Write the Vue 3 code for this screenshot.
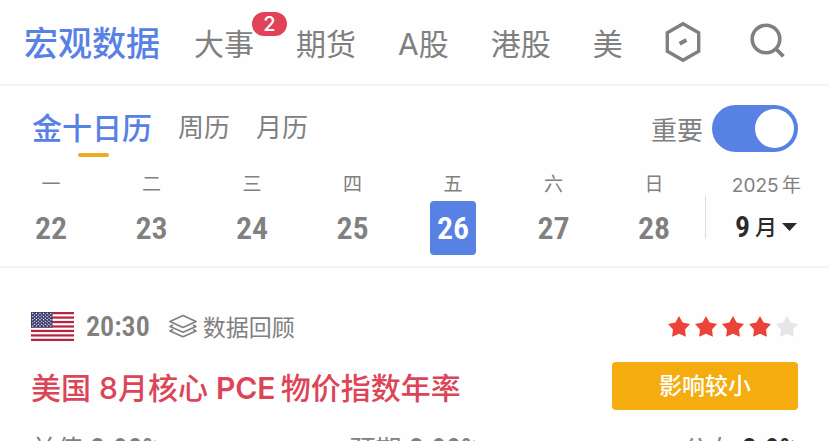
<template>
  <div class="page">
    <header class="top-bar">
      <nav class="channels">
        <a
          v-for="item in channels"
          :key="item.name"
          href="#"
          class="channel"
          :class="{ active: item.active }"
        >{{ item.name }}<span v-if="item.badge" class="badge">{{ item.badge }}</span></a>
      </nav>
      <button class="icon-btn" aria-label="设置">
        <svg width="36" height="42" viewBox="0 0 36 42" fill="none" stroke="#808080" stroke-width="3.4">
          <path d="M18 2.8 L33.7 11.8 V30.2 L18 39.2 L2.3 30.2 V11.8 Z" />
          <path d="M14.6 22.8 L21.4 19" stroke-width="4" />
        </svg>
      </button>
      <button class="icon-btn" aria-label="搜索">
        <svg width="38" height="38" viewBox="0 0 38 38" fill="none" stroke="#808080" stroke-width="3.6">
          <circle cx="17" cy="16" r="13.8" />
          <path d="M26.5 25.5 L34.4 33.4" stroke-width="3.8" />
        </svg>
      </button>
    </header>

    <section class="calendar">
      <div class="modes">
        <button v-for="(mode, i) in modes" :key="mode" class="mode" :class="{ active: i === 0 }">{{ mode }}</button>
        <label class="important">
          重要
          <input v-model="important" type="checkbox" class="switch" />
        </label>
      </div>
      <div class="week">
        <div class="days">
          <button v-for="day in days" :key="day.date" class="day" :class="{ active: day.date === selected }" @click="selected = day.date">
            <span class="weekday">{{ day.week }}</span>
            <span class="date">{{ day.date }}</span>
          </button>
        </div>
        <span class="divider"></span>
        <button class="month">
          <span class="year">2025&thinsp;年</span>
          <span class="month-value">
            <b>9</b>
            <span>月</span>
            <svg width="15" height="8" viewBox="0 0 15 8" fill="currentColor"><path d="M0 0 H15 L7.5 8 Z" /></svg>
          </span>
        </button>
      </div>
    </section>

    <article class="event">
      <div class="event-meta">
        <svg class="flag" width="43" height="29" viewBox="0 0 43 29">
          <rect width="43" height="29" fill="#fff" />
          <rect v-for="n in 7" :key="n" y="0" width="43" height="2.23" :transform="`translate(0 ${(n - 1) * 4.46})`" fill="#b72540" />
          <rect width="21.5" height="15.6" fill="#3c3b6e" />
          <circle v-for="(s, i) in flagStars" :key="i" :cx="s.x" :cy="s.y" r="0.65" fill="#fff" />
        </svg>
        <time class="time">20:30</time>
        <a href="#" class="review">
          <svg width="30" height="24" viewBox="0 0 30 24" fill="none" stroke="#808080" stroke-width="1.7" stroke-linejoin="round">
            <path d="M15 1.5 L28 7.5 L15 13.5 L2 7.5 Z" />
            <path d="M5 11 L2 12.5 L15 18.2 L28 12.5 L25 11" />
            <path d="M5 15.5 L2 17 L15 22.7 L28 17 L25 15.5" />
          </svg>
          数据回顾
        </a>
        <div class="stars" role="img" aria-label="4 / 5">
          <svg v-for="n in 5" :key="n" width="22" height="21" viewBox="0 0 22 21" class="star" :class="{ on: n <= 4 }">
            <path d="M11 0 L14.6 6.4 L22 7.9 L17 13.4 L17.9 20.7 L11 17.8 L4.1 20.7 L5 13.4 L0 7.9 L7.4 6.4 Z" />
          </svg>
        </div>
      </div>
      <div class="event-main">
        <h2 class="title">美国 8月核心 <span class="latin">PCE</span>&thinsp;物价指数年率</h2>
        <button class="impact">影响较小</button>
      </div>
      <div class="values">
        <span>前值 <b>2.90%</b></span>
        <span>预期 <b>2.90%</b></span>
        <span>公布 <b class="actual">2.9%</b></span>
      </div>
    </article>
  </div>
</template>

<script setup>
import { ref } from 'vue'

const important = ref(true)
const selected = ref(26)

const channels = [
  { name: '宏观数据', active: true },
  { name: '大事', badge: 2 },
  { name: '期货' },
  { name: 'A股' },
  { name: '港股' },
  { name: '美' }
]

const modes = ['金十日历', '周历', '月历']

const days = ['一', '二', '三', '四', '五', '六', '日'].map((week, i) => ({ week, date: 22 + i }))

// 9 rows, alternating 6 and 5 stars
const flagStars = []
for (let row = 0; row < 9; row++) {
  const count = row % 2 ? 5 : 6
  for (let col = 0; col < count; col++) {
    flagStars.push({ x: (row % 2 ? 3.6 : 1.8) + col * 3.6, y: 1.5 + row * 1.56 })
  }
}
</script>

<style>
body {
  background: #fefefe;
}
</style>

<style scoped>
.page {
  height: 100vh;
  overflow: hidden;
  color: #808080;
  font-family: Inter, "Noto Sans CJK SC", sans-serif;
}

button {
  padding: 0;
  border: 0;
  background: none;
  color: inherit;
  font: inherit;
  cursor: pointer;
}

a {
  color: inherit;
  text-decoration: none;
}

svg {
  display: block;
}

.top-bar {
  display: flex;
  align-items: center;
  height: 84px;
  padding: 0 42px 0 24px;
  border-bottom: 2px solid #f5f5f5;
}

.channels {
  display: flex;
  align-items: center;
  gap: 42px;
  margin-right: auto;
  padding-top: 4px;
}

.channel {
  position: relative;
  font-size: 30px;
  line-height: 40px;
  white-space: nowrap;
}
.channel.active {
  margin-right: -8px;
  color: #5781e3;
  font-size: 34px;
  font-weight: 500;
}

.badge {
  position: absolute;
  top: -12px;
  left: 58px;
  width: 35px;
  border-radius: 12px;
  background: #e14258;
  color: #fff;
  font-size: 20px;
  font-weight: 500;
  line-height: 24px;
  text-align: center;
}

.icon-btn {
  margin-left: 40px;
}
.icon-btn + .icon-btn {
  margin-left: 48px;
}

.calendar {
  padding: 18px 28px 11px 32px;
  border-bottom: 2px solid #f5f5f5;
}

.modes {
  display: flex;
  align-items: center;
  gap: 26px;
}

.mode {
  position: relative;
  font-size: 26px;
  line-height: 48px;
}
.mode.active {
  color: #5781e3;
  font-size: 30px;
  font-weight: 500;
}
.mode.active::after {
  content: "";
  position: absolute;
  bottom: -5px;
  left: 46px;
  width: 31px;
  height: 4px;
  border-radius: 2px;
  background: #eeab28;
}

.important {
  display: flex;
  align-items: center;
  gap: 9px;
  margin-left: auto;
  font-size: 26px;
}

.switch {
  display: flex;
  align-items: center;
  width: 86px;
  height: 47px;
  margin: 0 3px 0 0;
  padding: 4px;
  box-sizing: border-box;
  border-radius: 24px;
  background: #ccc;
  appearance: none;
}
.switch::before {
  content: "";
  width: 39px;
  height: 39px;
  border-radius: 50%;
  background: #fff;
}
.switch:checked {
  justify-content: flex-end;
  background: #5781e3;
}

.week {
  display: flex;
  align-items: center;
  padding-top: 19px;
}

.days {
  display: flex;
  flex: 1;
  justify-content: space-between;
  margin-left: -4px;
  padding-right: 28px;
}

.day {
  display: flex;
  flex-direction: column;
  align-items: center;
  width: 46px;
}

.weekday,
.year {
  font-size: 19px;
  line-height: 28px;
}

.date {
  width: 46px;
  margin-top: 2px;
  border-radius: 4px;
  font-size: 32px;
  line-height: 54px;
}
.date,
.time,
b {
  font-family: "Roboto Condensed", Roboto, "Noto Sans CJK SC", sans-serif;
  font-weight: 600;
}
.day.active .date {
  background: #5781e3;
  color: #fff;
}

.divider {
  align-self: flex-end;
  width: 1px;
  height: 43px;
  margin-bottom: 16px;
  background: #dcdcdc;
}

.month {
  display: flex;
  flex-direction: column;
  align-items: flex-end;
  width: 95px;
}

.month-value {
  display: flex;
  align-items: center;
  gap: 5px;
  padding-right: 4px;
  color: #2b2b2b;
  font-size: 22px;
  font-weight: 500;
  line-height: 54px;
}
.month-value b {
  font-size: 30px;
}

.event {
  padding: 41px 31px 0;
}

.event-meta {
  display: flex;
  align-items: center;
  height: 34px;
}

.time {
  margin-left: 12px;
  font-size: 28px;
}

.review {
  display: flex;
  align-items: center;
  gap: 5px;
  margin-left: 18px;
  font-size: 23px;
}

.stars {
  display: flex;
  gap: 5px;
  margin-left: auto;
}

.star {
  fill: #e6e6e6;
}
.star.on {
  fill: #eb4239;
}

.event-main {
  display: flex;
  align-items: center;
  justify-content: space-between;
  margin-top: 19px;
}

.title {
  margin: 0;
  color: #dc4557;
  font-size: 30px;
  font-weight: 500;
}

.latin {
  font-weight: 600;
}

.impact {
  width: 186px;
  border-radius: 4px;
  background: #f4ac0f;
  color: #fff;
  font-size: 23px;
  font-weight: 500;
  line-height: 48px;
}

.values {
  display: grid;
  grid-template-columns: 1fr 1fr 1fr;
  margin-top: 19px;
  font-size: 26px;
  line-height: 40px;
  text-align: center;
  white-space: nowrap;
}
.values span:first-child {
  text-align: left;
}
.values span:last-child {
  text-align: right;
}
.values b {
  font-size: 29px;
}

.actual {
  color: #2b2b2b;
}
</style>
